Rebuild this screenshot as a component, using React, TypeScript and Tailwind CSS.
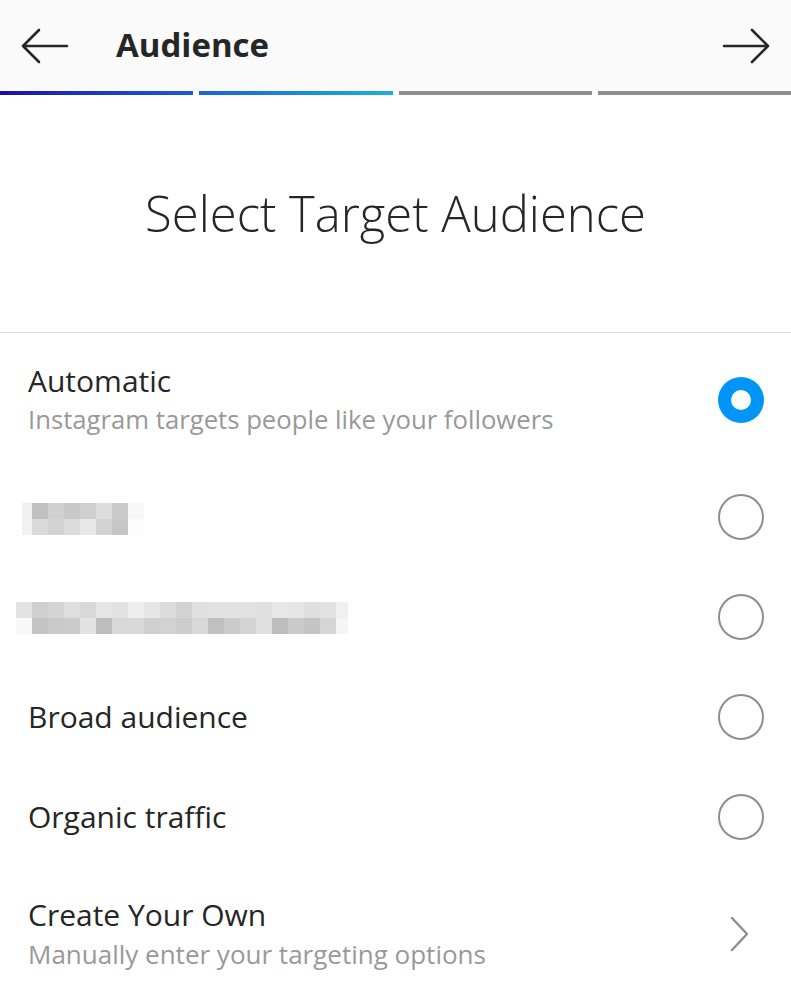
const blurA = [
	["bg-[#f0f0f0] w-[10px]", "bg-[#c0c0c0]", "bg-[#d0d0d0]", "bg-[#c8c8c8]", "bg-[#cfcfcf]", "bg-[#dddddd]", "bg-[#cacaca]", "bg-[#f8f8f8]"],
	["bg-[#f2f2f2] w-[10px]", "bg-[#dadada]", "bg-[#d3d3d3]", "bg-[#dcdcdc]", "bg-[#e8e8e8]", "bg-[#d3d3d3]", "bg-[#c6c6c6]", "bg-[#fcfcfc]"],
];

const blurB = [
	["bg-[#e3e3e3]", "bg-[#cfcfcf]", "bg-[#d4d4d4]", "bg-[#dedede]", "bg-[#d8d8d8]", "bg-[#e6e6e6]", "bg-[#e2e2e2]", "bg-[#eeeeee]", "bg-[#e6e6e6]", "bg-[#dcdcdc]", "bg-[#d3d3d3]", "bg-[#e0e0e0]", "bg-[#e2e2e2]", "bg-[#e2e2e2]", "bg-[#e2e2e2]", "bg-[#e0e0e0]", "bg-[#e8e8e8]", "bg-[#e6e6e6]", "bg-[#dfdfdf]", "bg-[#e2e2e2]", "bg-[#f0f0f0] w-[12px]"],
	["bg-[#f8f8f8]", "bg-[#c4c4c4]", "bg-[#cacaca]", "bg-[#cbcbcb]", "bg-[#e2e2e2]", "bg-[#bdbdbd]", "bg-[#d8d8d8]", "bg-[#d8d8d8]", "bg-[#cfcfcf]", "bg-[#d2d2d2]", "bg-[#cccccc]", "bg-[#d9d9d9]", "bg-[#c0c0c0]", "bg-[#cbcbcb]", "bg-[#d4d4d4]", "bg-[#e0e0e0]", "bg-[#bebebe]", "bg-[#cacaca]", "bg-[#c4c4c4]", "bg-[#d6d6d6]", "bg-[#f5f5f5] w-[12px]"],
];

function Mosaic({ rows }: { rows: string[][] }) {
	return (
		<div className="flex flex-col">
			{rows.map((row, i) => (
				<div key={i} className="flex">
					{row.map((c, j) => (
						<div key={j} className={`h-4 w-4 ${c}`} />
					))}
				</div>
			))}
		</div>
	);
}

function Radio({ checked }: { checked?: boolean }) {
	if (checked) {
		return (
			<div className="w-[46px] h-[46px] rounded-full bg-[#0095f6] flex items-center justify-center">
				<div className="w-[20px] h-[20px] rounded-full bg-white" />
			</div>
		);
	}
	return <div className="w-[46px] h-[46px] rounded-full border-2 border-[#8e8e8e]" />;
}

function Arrow({ flip }: { flip?: boolean }) {
	return (
		<svg
			width="48"
			height="36"
			viewBox="0 0 48 36"
			fill="none"
			stroke="#262626"
			strokeWidth="2.6"
			strokeLinecap="round"
			strokeLinejoin="round"
			className={flip ? "-scale-x-100" : ""}
		>
			<path d="M2 18 H46 M18 2 L2 18 L18 34" />
		</svg>
	);
}

export default function App() {
	return (
		<div
			className="w-[791px] h-[1000px] bg-white overflow-hidden text-[#262626]"
			style={{ fontFamily: '"Open Sans", "Noto Sans", sans-serif' }}
		>
			<div className="h-[91px] bg-[#fafafa] flex items-center pl-[21px] pr-[21px]">
				<Arrow />
				<h1 className="ml-[47px] text-[33px] font-bold flex-1 -mt-[1px]">Audience</h1>
				<Arrow flip />
			</div>
			<div className="flex gap-[6px] h-[4px]">
				<div className="flex-1 bg-gradient-to-r from-[#1c0aa6] to-[#1e5ccf]" />
				<div className="flex-1 bg-gradient-to-r from-[#1e62d1] to-[#1bb0de]" />
				<div className="flex-1 bg-[#8f8f8f]" />
				<div className="flex-1 bg-[#8f8f8f]" />
			</div>

			<div className="h-[237px] flex items-center justify-center">
				<h2 className="text-[49px] font-light text-[#262626]">Select Target Audience</h2>
			</div>
			<div className="h-px bg-[#dbdbdb]" />

			<div className="h-[134px] flex items-center pl-[28px] pr-[27px]">
				<div className="flex-1">
					<div className="text-[30px] leading-[40px]">Automatic</div>
					<div className="text-[25.7px] leading-[38px] text-[#999999]">
						Instagram targets people like your followers
					</div>
				</div>
				<Radio checked />
			</div>

			<div className="h-[100px] flex items-center pl-[22px] pr-[27px]">
				<div className="flex-1 pt-[4px]">
					<Mosaic rows={blurA} />
				</div>
				<Radio />
			</div>

			<div className="h-[100px] flex items-center pl-[16px] pr-[27px]">
				<div className="flex-1 pt-[2px]">
					<Mosaic rows={blurB} />
				</div>
				<Radio />
			</div>

			<div className="h-[100px] flex items-center pl-[28px] pr-[27px]">
				<div className="flex-1 text-[30px] leading-[40px]">Broad audience</div>
				<Radio />
			</div>

			<div className="h-[100px] flex items-center pl-[28px] pr-[27px]">
				<div className="flex-1 text-[30px] leading-[40px]">Organic traffic</div>
				<Radio />
			</div>

			<div className="h-[133px] flex items-center pl-[28px] pr-[27px]">
				<div className="flex-1">
					<div className="text-[30px] leading-[40px]">Create Your Own</div>
					<div className="text-[26px] leading-[38px] text-[#999999]">
						Manually enter your targeting options
					</div>
				</div>
				<svg
					width="22"
					height="38"
					viewBox="0 0 22 38"
					fill="none"
					stroke="#8e8e8e"
					strokeWidth="2.4"
					strokeLinecap="round"
					strokeLinejoin="round"
					className="mr-[14px]"
				>
					<path d="M4 3 L19 19 L4 35" />
				</svg>
			</div>
		</div>
	);
}
